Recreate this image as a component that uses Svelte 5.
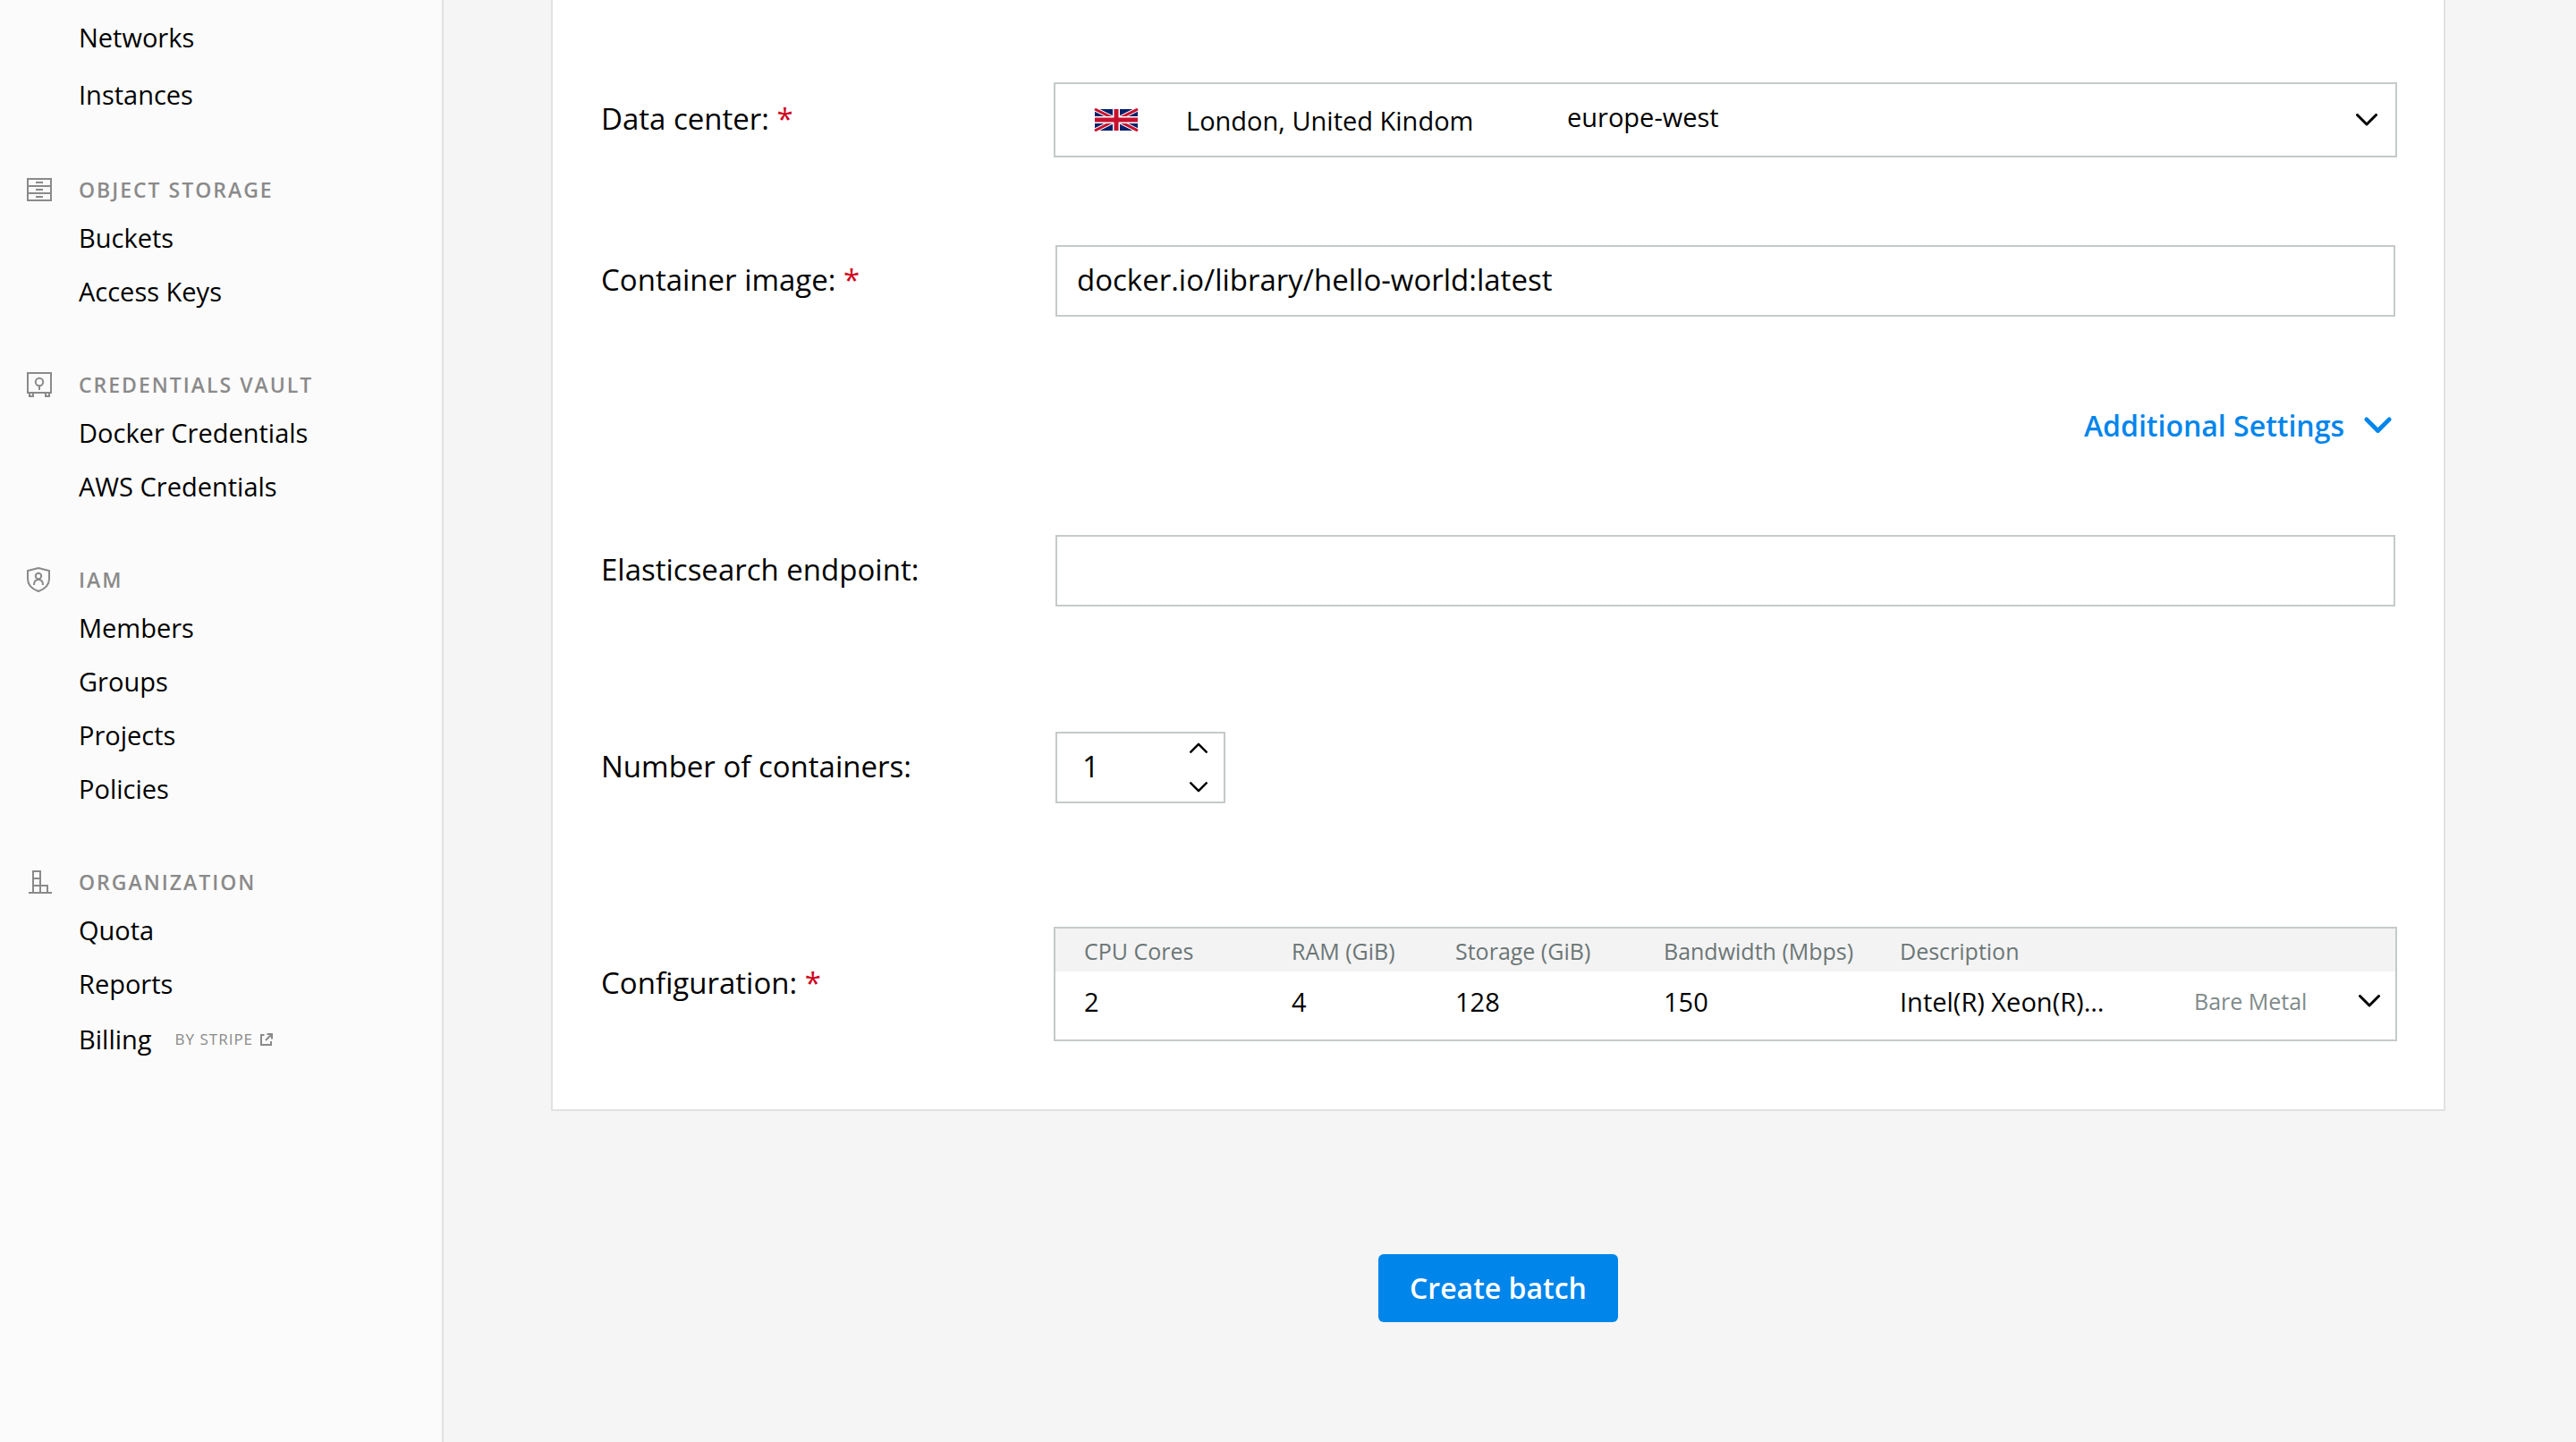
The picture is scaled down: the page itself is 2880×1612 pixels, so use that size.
<script lang="ts">
  type Item = { label: string; note?: string };
  type Group = { title: string; icon: string; items: Item[] };

  const topItems: Item[] = [{ label: 'Networks' }, { label: 'Instances' }];

  const groups: Group[] = [
    { title: 'OBJECT STORAGE', icon: 'drawers', items: [{ label: 'Buckets' }, { label: 'Access Keys' }] },
    { title: 'CREDENTIALS VAULT', icon: 'vault', items: [{ label: 'Docker Credentials' }, { label: 'AWS Credentials' }] },
    {
      title: 'IAM',
      icon: 'shield',
      items: [{ label: 'Members' }, { label: 'Groups' }, { label: 'Projects' }, { label: 'Policies' }],
    },
    {
      title: 'ORGANIZATION',
      icon: 'building',
      items: [{ label: 'Quota' }, { label: 'Reports' }, { label: 'Billing', note: 'BY STRIPE' }],
    },
  ];

  let image = $state('docker.io/library/hello-world:latest');
  let endpoint = $state('');
  let count = $state(1);
</script>

{#snippet chevron(kind: string)}
  <svg class="chevron {kind}" viewBox="0 0 24 14" aria-hidden="true"><path d="M1.5 1.5 12 12 22.5 1.5" /></svg>
{/snippet}

<div class="page">
  <nav class="sidebar" aria-label="Main">
    <ul class="tall">
      {#each topItems as item}
        <li><a href="#{item.label}">{item.label}</a></li>
      {/each}
    </ul>
    {#each groups as group}
      <section>
        <h2>
          <svg class="icon" viewBox="0 0 28 28" aria-hidden="true">
            {#if group.icon === 'drawers'}
              <path d="M1 2h26v24H1zM1 10h26M1 18h26M10 6h8M10 14h8M10 22h8" />
            {:else if group.icon === 'vault'}
              <path d="M1 1h26v22H1zM3 23v4h4v-4M21 23v4h4v-4M14 15v5" />
              <circle cx="14" cy="11" r="4.2" />
            {:else if group.icon === 'shield'}
              <path d="M1 4 13 1l12 3v9c0 7-5 11.500-12 14C6 24.500 1 20 1 13z" />
              <circle cx="13" cy="10" r="3.200" />
              <path d="M8 20c0-4 2-6 5-6s5 2 5 6" />
            {:else}
              <path d="M2 26h26M7 26V2h8v24M7 10h8M7 18h16v8" />
            {/if}
          </svg>
          {group.title}
        </h2>
        <ul>
          {#each group.items as item}
            <li class:noted={item.note}>
              <a href="#{item.label}">
                {item.label}
                {#if item.note}
                  <small>
                    {item.note}
                    <svg viewBox="0 0 14 14" aria-hidden="true"><path d="M4.500 2H1v11h11V9M7.500 1H13v5.500M13 1 6 8" /></svg>
                  </small>
                {/if}
              </a>
            </li>
          {/each}
        </ul>
      </section>
    {/each}
  </nav>

  <main>
    <form onsubmit={(e) => e.preventDefault()}>
      <div class="panel">
        <div class="row">
          <label for="dc">Data center: <span class="req">*</span></label>
          <div class="picker">
            <select id="dc">
              <option>London, United Kindom</option>
            </select>
            <svg class="flag" viewBox="0 0 50 26" aria-hidden="true">
              <path fill="#012169" d="M1 1h48v24H1z" />
              <path stroke="#fff" stroke-width="5" d="m1 1 48 24M49 1 1 25" />
              <path stroke="#c8102e" stroke-width="3" d="m1 1 48 24M49 1 1 25" />
              <path stroke="#fff" stroke-width="8" d="M25 1v24M1 13h48" />
              <path stroke="#c8102e" stroke-width="5" d="M25 1v24M1 13h48" />
            </svg>
            <span class="region">europe-west</span>
            {@render chevron('end')}
          </div>
        </div>

        <div class="row image">
          <label for="image">Container image: <span class="req">*</span></label>
          <input id="image" type="text" bind:value={image} />
        </div>

        <button type="button" class="more">Additional Settings {@render chevron('large')}</button>

        <div class="row endpoint">
          <label for="endpoint">Elasticsearch endpoint:</label>
          <input id="endpoint" type="text" bind:value={endpoint} />
        </div>

        <div class="row count">
          <label for="count">Number of containers:</label>
          <div class="stepper">
            <input id="count" type="text" inputmode="numeric" bind:value={count} />
            <div class="steps">
              <button type="button" aria-label="Increase" onclick={() => (count = Number(count) + 1)}>{@render chevron('small up')}</button>
              <button type="button" aria-label="Decrease" onclick={() => (count = Math.max(1, Number(count) - 1))}>{@render chevron('small')}</button>
            </div>
          </div>
        </div>

        <div class="row">
          <span class="label" id="config-label">Configuration: <span class="req">*</span></span>
          <table aria-labelledby="config-label">
            <colgroup>
              <col class="c-cpu" /><col class="c-ram" /><col class="c-storage" /><col class="c-band" /><col class="c-desc" /><col class="c-kind" /><col />
            </colgroup>
            <thead>
              <tr>
                <th>CPU Cores</th><th>RAM (GiB)</th><th>Storage (GiB)</th><th>Bandwidth (Mbps)</th><th>Description</th><td></td><td></td>
              </tr>
            </thead>
            <tbody>
              <tr>
                <td>2</td><td>4</td><td>128</td><td>150</td><td>Intel(R) Xeon(R)...</td><td class="kind">Bare Metal</td>
                <td class="open"><button type="button" aria-label="Choose configuration">{@render chevron('')}</button></td>
              </tr>
            </tbody>
          </table>
        </div>
      </div>
      <button type="submit" class="submit">Create batch</button>
    </form>
  </main>
</div>

<style>
  :global(body) {
    background: #f5f5f5;
  }
  .page {
    display: flex;
    min-height: 100vh;
    font-family: 'Open Sans', 'Noto Sans', sans-serif;
    font-size: 29px;
    color: #000;
  }
  .page :where(*) {
    box-sizing: border-box;
  }
  ul {
    list-style: none;
    margin: 0;
    padding: 0;
  }
  button,
  input,
  select {
    font: inherit;
    color: inherit;
    background: none;
    border: 0;
    padding: 0;
    margin: 0;
  }
  button {
    cursor: pointer;
  }

  .sidebar {
    flex: none;
    width: 496px;
    padding-top: 11px;
    background: #fbfbfb;
    border-right: 2px solid #e2e2e2;
  }
  .sidebar section {
    margin-top: 48px;
  }
  h2 {
    display: flex;
    align-items: center;
    gap: 30px;
    height: 50px;
    margin: 0;
    padding-left: 30px;
    font-size: 23px;
    font-weight: 600;
    letter-spacing: 2px;
    color: #8a8a8a;
  }
  .icon {
    width: 28px;
    height: 28px;
    fill: none;
    stroke: currentColor;
    stroke-width: 2;
  }
  .sidebar li {
    display: flex;
    align-items: center;
    height: 60px;
    padding: 0 0 3px 88px;
  }
  .sidebar .tall li,
  .sidebar li.noted {
    height: 64px;
  }
  .sidebar a {
    display: flex;
    align-items: center;
    gap: 26px;
    color: inherit;
    text-decoration: none;
  }
  small {
    display: flex;
    align-items: center;
    gap: 8px;
    font-size: 17px;
    letter-spacing: 1px;
    color: #8a8a8a;
  }
  small svg {
    width: 14px;
    height: 14px;
    fill: none;
    stroke: currentColor;
    stroke-width: 2;
  }

  main {
    flex: 1;
    min-width: 0;
    padding: 0 146px 134px 120px;
  }
  form {
    display: flex;
    flex-direction: column;
    align-items: center;
    gap: 160px;
  }
  .panel {
    display: flex;
    flex-direction: column;
    align-self: stretch;
    padding: 92px 52px 76px 54px;
    background: #fff;
    border: 2px solid #e2e2e2;
    border-top: 0;
  }
  .row {
    display: grid;
    grid-template-columns: 506px minmax(0, 1fr);
    align-items: center;
    font-size: 33px;
    margin-top: 138px;
  }
  .row:first-child {
    margin-top: 0;
  }
  .row.image {
    margin-top: 98px;
  }
  .row.endpoint {
    margin-top: 99px;
  }
  .row.count {
    margin-top: 140px;
  }
  label,
  .label {
    padding-bottom: 3px;
  }
  .req {
    color: #d0021b;
  }
  .row > input,
  .stepper {
    height: 80px;
    margin: 0 2px;
    border: 2px solid #c5caca;
    background: #fff;
  }
  .row > input {
    padding: 0 22px 3px;
  }

  .picker {
    display: grid;
    grid-template-columns: 148px 424px 1fr 44px;
    align-items: center;
    height: 84px;
    border: 2px solid #c5caca;
    font-size: 29px;
  }
  .picker > * {
    grid-row: 1;
    pointer-events: none;
  }
  .picker select {
    grid-column: 1 / -1;
    align-self: stretch;
    appearance: none;
    padding-left: 146px;
    pointer-events: auto;
  }
  .flag {
    grid-column: 1;
    width: 50px;
    height: 26px;
    margin-left: 43px;
  }
  .region {
    grid-column: 3;
    padding-bottom: 8px;
  }
  .chevron {
    display: block;
    width: 24px;
    height: 14px;
    fill: none;
    stroke: currentColor;
    stroke-width: 3;
    stroke-linecap: round;
    stroke-linejoin: round;
  }
  .chevron.end {
    grid-column: 4;
  }
  .chevron.large {
    width: 29px;
    height: 17px;
    stroke-width: 4;
    overflow: visible;
  }
  .chevron.small {
    width: 20px;
    height: 12px;
  }
  .chevron.up {
    transform: rotate(180deg);
  }

  .more {
    display: flex;
    align-items: center;
    align-self: flex-end;
    gap: 23px;
    height: 48px;
    margin-top: 97px;
    margin-right: 7px;
    font-size: 32px;
    font-weight: 600;
    color: #0085eb;
  }

  .stepper {
    display: flex;
    justify-self: start;
    width: 190px;
  }
  .stepper input {
    flex: 1;
    min-width: 0;
    padding: 0 0 3px 28px;
  }
  .steps {
    display: flex;
    flex-direction: column;
    justify-content: space-between;
    width: 38px;
    padding: 10px 0;
  }

  table {
    width: 100%;
    table-layout: fixed;
    border-spacing: 0;
    border: 2px solid #c5caca;
    font-size: 29px;
    text-align: left;
  }
  .c-cpu {
    width: 264px;
  }
  .c-ram {
    width: 183px;
  }
  .c-storage {
    width: 233px;
  }
  .c-band {
    width: 264px;
  }
  .c-desc {
    width: 329px;
  }
  .c-kind {
    width: 184px;
  }
  th,
  td {
    padding: 0;
    white-space: nowrap;
  }
  tr > :first-child {
    padding-left: 32px;
  }
  thead tr {
    height: 48px;
    background: #f3f3f3;
  }
  th {
    font-size: 25px;
    font-weight: 400;
    color: #6b7676;
    padding-top: 2px;
  }
  tbody td {
    height: 76px;
    padding-bottom: 10px;
  }
  .kind {
    font-size: 25px;
    color: #7f8a8a;
  }
  .open button {
    display: block;
  }

  .submit {
    height: 76px;
    padding: 0 35px 2px;
    border-radius: 6px;
    background: #0085eb;
    color: #fff;
    font-size: 32px;
    font-weight: 600;
  }
</style>
